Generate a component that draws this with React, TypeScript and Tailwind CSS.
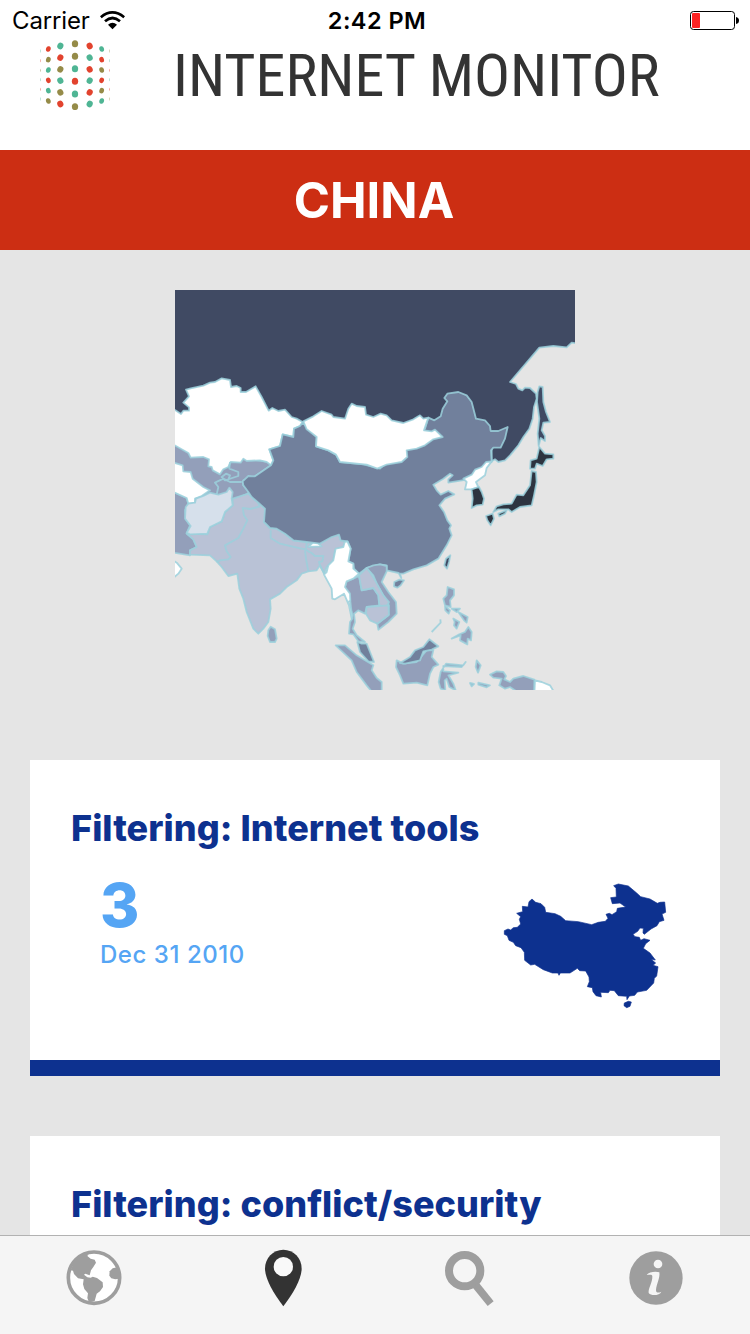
import React from "react";

type Shape = { fill: string; d: string };

const SLATE = "#404a63";
const STEEL = "#71809c";
const MIST = "#939fba";
const PALE = "#b9c2d6";
const INK = "#2d3440";

const countries: Shape[] = [
  { fill: SLATE, d: "M5 5H1225V175L1205 172 1190 186 1150 182 1108 187 1020 290 1038 296 1045 310 1057 315 1065 307 1080 308 1098 325 1100 340 1092 365 1088 400 1078 430 1060 455 1045 480 1020 510 1005 525 985 530 975 522 965 528V450L800 450 400 430 5 420Z" },
  { fill: MIST, d: "M5 474L62 500 303 530 303 540 255 573 220 585 235 610 235 625 185 645 120 640 55 655 5 622Z" },
  { fill: MIST, d: "M5 618L50 638 55 655 45 675 47 700 60 720 50 745 70 762 80 785 60 795 60 810 5 801Z" },
  { fill: "#fff", d: "M5 370L15 374 33 386 40 376 57 376 57 366 40 352 57 333 48 313 62 309 100 301 120 292 135 290 155 279 180 284 183 305 200 302 212 308 212 320 228 320 257 303 275 335 296 376 307 368 325 377 345 373 365 395 380 400 398 410 390 422 372 430 370 455 338 447 330 482 298 492 310 525 303 540 290 530 270 525 230 527 220 520 212 532 182 530 175 545 160 552 150 567 128 555 125 545 115 543 117 522 100 515 62 517 55 503 5 475Z" },
  { fill: "#fff", d: "M5 530L15 533 38 540 40 558 62 560 68 580 100 605 120 615 95 632 75 640 75 652 55 655 50 638 5 618Z" },
  { fill: PALE, d: "M188 640L235 625 250 640 265 652 285 670 288 695 282 710 300 728 320 730 345 745 370 765 410 770 450 775 470 758 490 753 507 748 512 765 535 768 520 785 495 795 490 825 470 845 462 865 450 840 440 855 415 858 395 865 380 885 350 905 330 925 300 942 302 970 295 1010 280 1030 265 1045 250 1030 230 980 220 940 208 910 202 865 175 872 155 845 140 828 120 810 60 808 60 795 80 785 70 762 50 745 112 747 120 725 155 708 165 680 188 660Z" },
  { fill: "#d6e0eb", d: "M55 655L75 652 78 640 100 632 120 622 145 628 170 620 178 607 188 620 185 640 188 660 165 680 155 708 120 725 112 745 60 747 50 742 62 722 45 700 47 665Z" },
  { fill: "none", d: "M265 652L268 664 240 671 218 668 222 690 232 705 220 730 205 758 165 780 170 798 182 815 175 822 150 825 140 830M302 735L302 758 330 775 365 783 408 793 410 770M405 790L415 798 425 803 435 812 460 812 457 828 447 830 452 845 462 862M405 795L408 820 415 858M180 530L178 550 205 560 205 572 165 585 155 575 168 565 180 570 175 582M160 580L180 590 215 590M160 580L135 592 145 605 140 628M218 588L220 600 235 610" },
  { fill: "#fff", d: "M415 785L430 770 442 772 455 783Z" },
  { fill: STEEL, d: "M398 412L440 455 438 483 475 495 498 508 510 530 580 537 630 550 765 430 775 397 793 405 812 393 818 370 832 348 823 338 832 325 865 320 890 330 905 350 918 400 945 405 960 422 962 437 985 437 1013 425 1005 460 992 487 970 487 963 495 965 530 950 535 920 560 890 583 835 592 835 582 848 570 840 565 820 580 790 598 800 615 812 628 835 617 853 627 825 640 808 660 822 680 832 705 843 720 838 730 845 750 830 780 805 820 770 840 730 852 700 865 690 865 694 878 686 863 650 855 650 840 630 837 590 848 567 865 552 850 550 835 535 828 542 790 533 768 512 765 507 748 485 755 450 775 410 770 370 765 345 745 320 730 300 728 282 710 285 670 265 652 245 635 235 620 220 600 218 588 235 572 255 573 303 540 310 525 298 492 330 482 338 447 370 455 372 430 390 422Z" },
  { fill: "#fff", d: "M400 408L430 393 455 377 485 388 490 395 525 400 535 370 545 355 560 362 585 365 588 388 610 395 632 385 650 390 665 405 700 413 730 402 750 390 760 400 775 397 762 435 785 438 795 433 818 455 790 462 765 480 740 490 710 495 712 515 695 530 650 538 622 550 590 538 510 530 498 508 475 495 438 483 440 455 410 432Z" },
  { fill: "#fff", d: "M965 528L948 530 935 545 915 553 905 568 880 580 890 590 885 612 905 612 925 605 918 590 945 570 950 548Z" },
  { fill: INK, d: "M905 612L927 605 935 620 942 640 938 658 920 660 905 668 908 640Z" },
  { fill: INK, d: "M1108 485L1125 505 1150 507 1150 520 1130 522 1118 542 1100 535 1095 550 1080 550 1082 525 1100 520Z" },
  { fill: INK, d: "M1085 557L1098 560 1100 590 1092 630 1085 660 1050 665 1025 680 1015 672 985 672 970 680 980 663 1000 657 1025 655 1040 628 1060 630 1080 600Z" },
  { fill: INK, d: "M948 692L968 685 972 700 962 720 952 705ZM985 685L1010 675 1005 685 988 693Z" },
  { fill: SLATE, d: "M1108 303L1118 305 1120 350 1128 380 1140 410 1120 412 1115 435 1125 452 1125 467 1112 458 1106 482 1103 445 1108 400 1101 350 1103 320Z" },
  { fill: SLATE, d: "M841 810L837 830 831 850 823 840 828 820Z" },
  { fill: STEEL, d: "M673 890L688 883 702 885 692 900 682 907 672 903Z" },
  { fill: MIST, d: "M530 888L550 880 567 872 575 915 610 908 625 930 628 960 590 965 585 985 565 975 552 985 555 1010 548 1030 560 1050 585 1070 565 1068 550 1047 537 1045 540 1010 547 1000 540 940 525 905Z" },
  { fill: "#fff", d: "M532 768L542 790 535 828 550 835 550 850 567 865 550 880 530 888 525 905 540 925 541 945 535 950 548 990 545 1000 537 960 522 925 495 942 487 940 485 910 462 868 470 860 475 840 490 825 497 790 520 785 524 770Z" },
  { fill: MIST, d: "M590 848L610 840 630 837 650 842 650 858 635 890 655 920 678 950 680 985 655 1010 625 1033 622 1015 655 990 657 960 640 930 620 895 610 870Z" },
  { fill: PALE, d: "M567 870L590 848 603 865 615 885 640 930 657 950 650 965 628 960 625 930 610 908 575 915Z" },
  { fill: PALE, d: "M590 965L655 960 657 988 622 1015 600 1005 588 985Z" },
  { fill: STEEL, d: "M562 1070L575 1075 590 1075 600 1100 612 1130 595 1128 570 1100Z" },
  { fill: MIST, d: "M497 1080L525 1080 560 1110 610 1140 605 1155 620 1178 635 1190 635 1225H610L590 1200 560 1160 545 1125Z" },
  { fill: MIST, d: "M680 1125L700 1135 740 1130 770 1095 790 1095 785 1115 805 1138 790 1145 780 1165 772 1200 740 1192 700 1195 690 1170 678 1145Z" },
  { fill: STEEL, d: "M690 1133L720 1115 735 1095 760 1085 778 1062 805 1083 785 1093 760 1098 750 1125 705 1135Z" },
  { fill: MIST, d: "M833 905L852 912 852 930 840 945 842 965 825 960 820 940 830 930ZM825 962L840 975 836 985 826 975ZM845 970L870 970 860 980ZM865 980L893 995 890 1012 882 1005ZM850 1000L868 1010 860 1030 852 1020 854 1010ZM868 1047L885 1040 895 1025 905 1040 903 1065 893 1060 892 1077 870 1065 872 1050 845 1060Z" },
  { fill: MIST, d: "M828 1135L880 1140 887 1130 875 1145 820 1142 820 1158 865 1162 835 1170 850 1195 857 1215 838 1205 830 1180 824 1185 826 1215 812 1210 806 1190 812 1160Z" },
  { fill: MIST, d: "M920 1125L932 1140 924 1162 917 1145ZM900 1193L912 1196 905 1203ZM925 1192L960 1200 950 1206 925 1198Z" },
  { fill: MIST, d: "M960 1168L980 1158 1000 1160 1008 1172 1003 1182 1020 1190 1030 1180 1060 1172 1093 1183V1225H1050L1020 1205 1005 1210 988 1200 995 1180 970 1177Z" },
  { fill: "#fff", d: "M1095 1185L1115 1190 1140 1200 1155 1225H1093Z" },
  { fill: MIST, d: "M302 1024L315 1032 320 1060 315 1070 300 1070 293 1052 295 1035Z" },
  { fill: "#fff", d: "M5 822L22 834 35 850 25 865 5 882Z" },
  { fill: "none", d: "M785 1040L812 1012 811 1002" },
];

function RegionMap() {
  return (
    <svg className="block size-[400px]" viewBox="15 14 1200 1200" aria-label="Region map">
      {countries.map((c, i) => (
        <path key={i} d={c.d} fill={c.fill} stroke="#9bd0dc" strokeOpacity={0.85} strokeWidth={5.5} strokeLinejoin="round" />
      ))}
    </svg>
  );
}

function ChinaShape() {
  return (
    <svg className="block h-[150px] w-[190px]" viewBox="0 0 570 450" fill="#0d318f" stroke="#0d318f" strokeWidth="2" strokeLinejoin="round">
      <path d="M43 182L54 177 62 180 70 173 82 172 92 162 88 148 92 140 80 130 98 125 97 109 114 111 117 95 126 87 137 97 153 101 164 112 167 127 195 131 212 139 227 152 265 155 305 164 325 157 346 154 354 145 348 133 358 130 366 134 380 125 382 115 407 111 390 99 367 101 362 83 379 81 378 55 371 47 385 42 415 48 440 69 452 80 480 87 502 100 510 97 524 96 527 127 516 132 522 151 508 155 501 167 483 177 463 193 459 189 460 175 450 174 443 184 429 193 435 200 448 202 452 211 462 206 480 211 467 221 460 235 480 249 496 270 483 268 497 279 489 286 504 290 500 318 493 325 491 339 470 361 442 366 434 376 418 378 411 389 410 379 385 377 373 362 360 361 355 368 332 367 334 381 318 377 309 365 307 353 292 350 298 335 297 321 287 303 269 302 262 295 240 309 211 309 207 316 204 309 187 309 160 299 134 283 122 285 104 271 103 247 93 233 77 227 70 217 57 211 52 197 43 193Z" />
      <path d="M403 399L415 394 424 396 420 409 410 413 402 407Z" />
    </svg>
  );
}

const R = "#e2432e";
const G = "#4fb594";
const O = "#958b48";
const logoColumns = [
  { x: 145, rx: 7, ry: 8.5, tilt: 18, ys: [147, 179, 210, 241, 272, 303], colors: [R, O, G, R, G, O] },
  { x: 181, rx: 9, ry: 10, tilt: 28, ys: [138, 173, 208, 242, 277, 312], colors: [G, R, O, G, O, R] },
  { x: 225, rx: 9.5, ry: 10.5, tilt: 0, ys: [131, 169, 206, 244, 282, 320], colors: [O, O, G, R, G, O] },
  { x: 269, rx: 9, ry: 10, tilt: -28, ys: [138, 173, 208, 242, 277, 312], colors: [R, G, R, G, R, G] },
  { x: 305, rx: 7, ry: 8.5, tilt: -18, ys: [147, 179, 210, 241, 272, 303], colors: [G, R, O, R, O, G] },
  { x: 121.5, rx: 1, ry: 5, tilt: 0, ys: [153, 182, 211, 239, 268, 297], colors: [G, R, O, G, R, G] },
  { x: 328.5, rx: 1, ry: 5, tilt: 0, ys: [153, 182, 211, 239, 268, 297], colors: [O, G, R, G, R, O] },
];

function Logo() {
  return (
    <svg className="block size-[70px] shrink-0" viewBox="120 120 210 210">
      {logoColumns.map((col) =>
        col.ys.map((y, i) => (
          <ellipse
            key={`${col.x}-${y}`}
            cx={col.x}
            cy={y}
            rx={col.rx}
            ry={col.ry}
            fill={col.colors[i]}
            opacity={col.rx === 1 ? 0.6 : 1}
            transform={`rotate(${(i < 3 ? 1 : -1) * col.tilt} ${col.x} ${y})`}
          />
        )),
      )}
    </svg>
  );
}

function StatusBar() {
  return (
    <div className="grid h-10 grid-cols-3 items-center pt-px text-[24px] leading-none text-black">
      <div className="flex items-center gap-[10px] pl-3">
        <span className="tracking-[-0.15px]">Carrier</span>
        <svg className="h-[19px] w-[25px]" viewBox="0 0 75 57" fill="none" stroke="#000" strokeWidth="8">
          <path d="M2.500 18.500Q37 -10 72.500 18.500" />
          <path d="M15 31Q37.500 11 60 31" />
          <path d="M37.500 55L24 41Q37.500 30 51 41Z" fill="#000" stroke="none" />
        </svg>
      </div>
      <span className="pl-1 text-center text-[23.5px] font-semibold tracking-[0.45px]">2:42 PM</span>
      <div className="flex justify-end pr-[11px]">
        <svg className="h-[19px] w-[49px]" viewBox="0 0 49 19">
          <rect x=".5" y=".5" width="44" height="18" rx="3" fill="none" stroke="#000" />
          <rect x="2" y="2" width="8" height="15" rx="1" fill="#fd2222" />
          <path d="M46 6Q49 6.500 49 9.500T46 13Z" fill="#000" />
        </svg>
      </div>
    </div>
  );
}

function Card({ title, children }: { title: string; children?: React.ReactNode }) {
  return (
    <section className="h-[316px] shrink-0 border-b-[16px] border-[#0d318f] bg-white px-[41px] pt-[46px]">
      <h2 className="text-[36px] leading-[44px] font-extrabold tracking-[0.05px] whitespace-nowrap text-[#0d318f]">{title}</h2>
      {children}
    </section>
  );
}

function TabBar() {
  return (
    <nav className="grid h-[99px] shrink-0 grid-cols-4 justify-items-center border-t border-[#b2b2b2] bg-[#f5f5f5] pt-[12px] text-[#9e9e9e]">
      <svg className="size-[58px]" viewBox="105 54 174 174">
        <circle cx="192" cy="143" r="77" fill="#fff" stroke="currentColor" strokeWidth="11" />
        <g fill="currentColor">
          <path d="M176 72L172 78 182 86 194 89 198 98 190 111 183 121 179 136 166 131 162 134 172 142 182 143 188 140 201 144 218 157 219 171 210 184 200 191 194 213 177 217 172 204 174 190 163 177 159 163 161 148 144 145 132 132 129 122 122 121 132 98 150 78Z" />
          <path d="M262 112L248 115 239 124 238 137 244 145 256 148 267 146 268 125Z" />
        </g>
      </svg>
      <svg className="mt-px mr-[-3px] h-[58px] w-[40px] text-[#333]" viewBox="697 57 120 174">
        <path d="M758 59C727 59 703 84 703 116C703 145 728 190 758 229C788 190 813 145 813 116C813 84 789 59 758 59Z" fill="currentColor" />
        <circle cx="758" cy="110" r="29" fill="#f9f9f9" />
      </svg>
      <svg className="mt-[2px] h-[58px] w-[50px]" viewBox="71 57 150 174" fill="none" stroke="currentColor">
        <circle cx="133" cy="119" r="47" strokeWidth="24" />
        <path d="M166 162L211 218" strokeWidth="23" />
      </svg>
      <svg className="mt-[2px] size-[56px]" viewBox="627 60 168 168">
        <circle cx="711" cy="144" r="80" fill="currentColor" />
        <circle cx="717" cy="102" r="13" fill="#f5f5f5" />
        <path d="M683 135C689 127 708 123 721 127C724 144 712 162 711 180C711 189 718 189 727 185C723 196 697 199 689 189C687 176 701 157 700 139C699 132 692 135 683 135Z" fill="#f5f5f5" />
      </svg>
    </nav>
  );
}

export default function App() {
  return (
    <div className="flex h-[1334px] w-[750px] flex-col overflow-hidden bg-[#e5e5e5] font-['Inter',sans-serif]">
      <header className="h-[150px] shrink-0 bg-white">
        <StatusBar />
        <div className="flex h-[70px] items-center pl-10">
          <Logo />
          <h1 className="ml-[63px] pt-[2px] font-['Roboto_Condensed','Roboto',sans-serif] text-[60px] leading-[70px] font-normal whitespace-nowrap text-[#333]">
            INTERNET MONITOR
          </h1>
        </div>
      </header>
      <div className="flex h-[100px] shrink-0 items-center justify-center bg-[#cc2e13] pt-px pr-[2px] text-[49px] font-bold text-white">CHINA</div>
      <main className="flex min-h-0 flex-1 flex-col overflow-hidden px-[30px] pt-10">
        <div className="flex shrink-0 justify-center">
          <RegionMap />
        </div>
        <div className="mt-[70px] flex shrink-0 flex-col gap-[60px]">
          <Card title="Filtering: Internet tools">
            <div className="flex justify-between pr-px">
              <div className="pt-[20px] pl-[29px] text-[#55a5f4]">
                <div className="text-[60px] leading-[70px] font-extrabold">3</div>
                <div className="text-[24px] leading-[30px] font-medium tracking-[0.55px] whitespace-nowrap">Dec 31 2010</div>
              </div>
              <div className="-mr-[2px] pt-[20px]">
                <ChinaShape />
              </div>
            </div>
          </Card>
          <Card title="Filtering: conflict/security" />
        </div>
      </main>
      <TabBar />
    </div>
  );
}
